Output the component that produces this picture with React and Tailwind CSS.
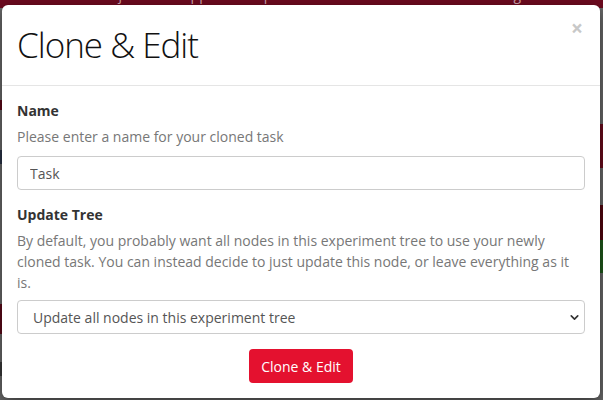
import { ChevronDown } from 'lucide-react';

const NavBehind = () => (
  <div className="relative h-[8px] bg-[#6d0a1f] text-[#cfa3ad] text-[14px] leading-[20px] overflow-hidden">
    <div className="absolute left-[96px] top-[-15px] flex gap-[26px]">
      <span>Projects</span>
      <span>Support</span>
      <span>Open Studies</span>
    </div>
    <div className="absolute left-[445px] top-[-15px] flex gap-[20px]">
      <span>♥ 42</span>
      <span>Megan Ec</span>
    </div>
  </div>
);

const PageBehind = () => (
  <div className="flex flex-col h-full">
    <NavBehind />
    <div className="flex flex-1">
      <div className="w-[2px] flex flex-col">
        <div className="h-[92px]" />
        <div className="h-[10px] bg-[#5c0a19]" />
        <div className="h-[40px]" />
        <div className="h-[14px] bg-[#2a3346]" />
        <div className="h-[140px]" />
        <div className="h-[30px] bg-[#5c0a19]" />
        <div className="h-[28px]" />
        <div className="h-[14px] bg-[#3a3a3a]" />
      </div>
      <div className="flex-1" />
      <div className="w-[3px] flex flex-col">
        <div className="h-[116px]" />
        <div className="h-[44px] bg-[#6a0b1c]" />
        <div className="h-[37px]" />
        <div className="h-[35px] bg-[#52060f]" />
        <div className="h-[33px] bg-[#1f5a1c]" />
      </div>
    </div>
  </div>
);

export default function App() {
  return (
    <div className="relative w-[603px] h-[400px] overflow-hidden bg-[#6a6a6a] font-['Open_Sans',sans-serif]">
      <PageBehind />

      <div className="absolute left-[2px] top-[5px] w-[598px] bg-white rounded-[6px] shadow-[0_5px_15px_rgba(0,0,0,0.5)]">
        <div className="relative px-[15px] py-[15px] border-b border-[#e5e5e5]">
          <h4 className="text-[35px] leading-[50px] font-light tracking-[-1px] text-[#111]">Clone &amp; Edit</h4>
          <button className="absolute right-[17px] top-[13px] text-[21px] leading-[21px] font-bold text-[#c8c8c8]">
            ×
          </button>
        </div>

        <div className="p-[15px] text-[14px]">
          <label className="block font-bold leading-[20px] text-[#333] mb-[6px]">Name</label>
          <p className="leading-[20px] text-[#777] mb-[9px]">Please enter a name for your cloned task</p>
          <input
            type="text"
            defaultValue="Task"
            className="block w-full h-[34px] px-[12px] border border-[#ccc] rounded-[4px] text-[14px] text-[#555] outline-none"
          />

          <label className="block font-bold leading-[20px] text-[#333] mt-[15px] mb-[5px]">Update Tree</label>
          <p className="leading-[21px] text-[#777]">
            By default, you probably want all nodes in this experiment tree to use your newly cloned task. You can instead
            decide to just update this node, or leave everything as it is.
          </p>
          <div className="relative mt-[7px]">
            <select className="block w-full h-[34px] pl-[15px] pr-[30px] border border-[#ccc] rounded-[4px] text-[14px] text-[#555] bg-white appearance-none outline-none">
              <option>Update all nodes in this experiment tree</option>
              <option>Update only this node</option>
              <option>Don't update anything</option>
            </select>
            <ChevronDown
              size={13}
              strokeWidth={3}
              className="absolute right-[4px] top-[11px] text-[#333] pointer-events-none"
            />
          </div>

          <div className="flex justify-center mt-[15px]">
            <button className="h-[34px] px-[12px] rounded-[4px] bg-[#e4112f] text-white text-[14px]">
              Clone &amp; Edit
            </button>
          </div>
        </div>
      </div>
    </div>
  );
}
